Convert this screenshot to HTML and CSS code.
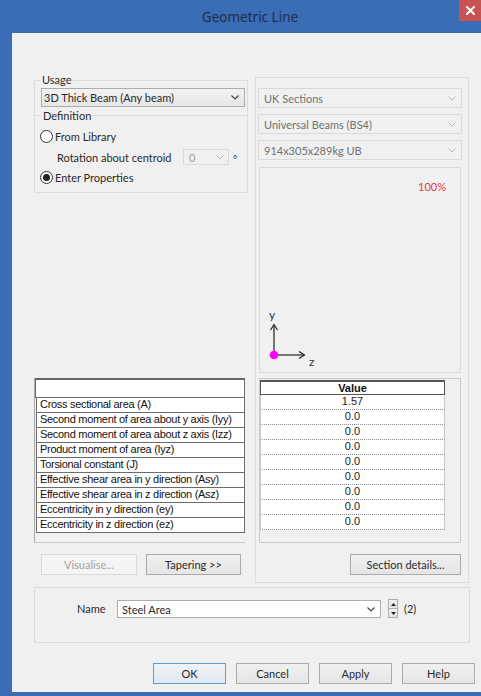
FILE: index.html
```html
<!DOCTYPE html>
<html lang="en">
<head>
<meta charset="utf-8">
<title>Geometric Line</title>
<link rel="stylesheet" href="styles.css">
</head>
<body>
<div class="window">
  <div class="titlebar">
    <span class="title">Geometric Line</span>
    <span class="close">
      <svg width="9" height="9" viewBox="0 0 9 9"><path d="M1 1L8 8M8 1L1 8" stroke="#fff" stroke-width="2" stroke-linecap="square"/></svg>
    </span>
  </div>

  <div class="client">
    <div class="main">
      <!-- left column: usage / definition, property names, actions -->
      <div class="left-col">
        <div class="group usage">
          <span class="legend">Usage</span>
          <div class="combo enabled">
            <span>3D Thick Beam (Any beam)</span>
            <svg class="chev" width="8" height="5" viewBox="0 0 8 5"><path d="M0.5 0.5L4 4L7.5 0.5" fill="none" stroke="#444" stroke-width="1.2"/></svg>
          </div>
          <div class="subhead"><span>Definition</span></div>
          <div class="radio-row"><span class="radio"></span>From Library</div>
          <div class="rotation-row">
            <span class="rot-label">Rotation about centroid</span>
            <div class="combo small">
              <span>0</span>
              <svg class="chev" width="8" height="5" viewBox="0 0 8 5"><path d="M0.5 0.5L4 4L7.5 0.5" fill="none" stroke="#b9b9b9" stroke-width="1"/></svg>
            </div>
            <span class="deg">°</span>
          </div>
          <div class="radio-row"><span class="radio checked"></span>Enter Properties</div>
        </div>

        <div class="ptable">
          <div class="prow head"></div>
          <div class="prow">Cross sectional area (A)</div>
          <div class="prow">Second moment of area about y axis (Iyy)</div>
          <div class="prow">Second moment of area about z axis (Izz)</div>
          <div class="prow">Product moment of area (Iyz)</div>
          <div class="prow">Torsional constant (J)</div>
          <div class="prow">Effective shear area in y direction (Asy)</div>
          <div class="prow">Effective shear area in z direction (Asz)</div>
          <div class="prow">Eccentricity in y direction (ey)</div>
          <div class="prow">Eccentricity in z direction (ez)</div>
        </div>

        <div class="btn-row left">
          <button class="btn disabled visualise">Visualise...</button>
          <button class="btn tapering">Tapering &gt;&gt;</button>
        </div>
      </div>

      <!-- right column: section library, preview, values -->
      <div class="group section">
        <div class="combo">
          <span>UK Sections</span>
          <svg class="chev" width="8" height="5" viewBox="0 0 8 5"><path d="M0.5 0.5L4 4L7.5 0.5" fill="none" stroke="#b9b9b9" stroke-width="1"/></svg>
        </div>
        <div class="combo">
          <span>Universal Beams (BS4)</span>
          <svg class="chev" width="8" height="5" viewBox="0 0 8 5"><path d="M0.5 0.5L4 4L7.5 0.5" fill="none" stroke="#b9b9b9" stroke-width="1"/></svg>
        </div>
        <div class="combo">
          <span>914x305x289kg UB</span>
          <svg class="chev" width="8" height="5" viewBox="0 0 8 5"><path d="M0.5 0.5L4 4L7.5 0.5" fill="none" stroke="#b9b9b9" stroke-width="1"/></svg>
        </div>

        <div class="preview">
          <span class="scale">100%</span>
          <svg class="axes" width="52" height="68" viewBox="0 0 52 68">
            <text x="6" y="16" class="axis-label">y</text>
            <path d="M11 52V22" stroke="#222" stroke-width="1.2"/>
            <path d="M7.5 27L11 21.5L14.5 27" fill="none" stroke="#222" stroke-width="1.2"/>
            <path d="M11 52H41" stroke="#222" stroke-width="1.2"/>
            <path d="M36 48.5L41.5 52L36 55.5" fill="none" stroke="#222" stroke-width="1.2"/>
            <text x="46" y="63" class="axis-label">z</text>
            <circle cx="11" cy="52" r="4.3" fill="#ff00ff"/>
          </svg>
        </div>

        <div class="vtable">
          <div class="vcol">
            <div class="vhead">Value</div>
            <div class="vrow">1.57</div>
            <div class="vrow">0.0</div>
            <div class="vrow">0.0</div>
            <div class="vrow">0.0</div>
            <div class="vrow">0.0</div>
            <div class="vrow">0.0</div>
            <div class="vrow">0.0</div>
            <div class="vrow">0.0</div>
            <div class="vrow">0.0</div>
          </div>
        </div>

        <div class="btn-row right">
          <button class="btn details">Section details...</button>
        </div>
      </div>
    </div>

    <div class="group name-box">
      <span class="name-label">Name</span>
      <div class="name-input">
        <span>Steel Area</span>
        <svg class="chev" width="8" height="5" viewBox="0 0 8 5"><path d="M0.5 0.5L4 4L7.5 0.5" fill="none" stroke="#444" stroke-width="1.2"/></svg>
      </div>
      <div class="spinner">
        <span class="spin up"><svg width="5" height="3" viewBox="0 0 5 3"><path d="M0 3L2.5 0L5 3Z" fill="#222"/></svg></span>
        <span class="spin down"><svg width="5" height="3" viewBox="0 0 5 3"><path d="M0 0L2.5 3L5 0Z" fill="#222"/></svg></span>
      </div>
      <span class="count">(2)</span>
    </div>

    <div class="dialog-buttons">
      <button class="btn default">OK</button>
      <button class="btn">Cancel</button>
      <button class="btn">Apply</button>
      <button class="btn">Help</button>
    </div>
  </div>
</div>
</body>
</html>
```

FILE: styles.css
```css
* {
  box-sizing: border-box;
}

html,
body {
  margin: 0;
  padding: 0;
}

body {
  width: 481px;
  height: 696px;
  overflow: hidden;
  background: #3b6cb6;
  font-family: Lato, "Noto Sans", sans-serif;
  font-size: 11px;
  color: #2a2a2a;
}

.window {
  display: flex;
  flex-direction: column;
  height: 696px;
}

/* title bar */
.titlebar {
  position: relative;
  flex: none;
  height: 33px;
  padding-left: 19px;
  display: flex;
  align-items: center;
  justify-content: center;
  background: #3b6cb6;
}

.title {
  font-family: "Noto Sans", "Open Sans", sans-serif;
  font-size: 13.5px;
  color: #1f2e4b;
}

.close {
  position: absolute;
  top: 0;
  right: 0;
  width: 22px;
  height: 21px;
  display: flex;
  align-items: center;
  justify-content: center;
  background: #c75450;
}

/* dialog client area */
.client {
  flex: 1;
  margin: 0 0 4px 12px;
  padding: 44px 6px 0 22px;
  background: #f0f0f0;
  display: flex;
  flex-direction: column;
}

.main {
  display: grid;
  grid-template-columns: 214px 214px;
  column-gap: 7px;
  height: 506px;
}

.group {
  border: 1px solid #dcdcdc;
}

.legend {
  display: inline-block;
  margin: -9px 0 0 0;
  padding: 0 1px;
  line-height: 15px;
  background: #f0f0f0;
}

/* left column */
.left-col {
  display: flex;
  flex-direction: column;
  padding-bottom: 8px;
}

.usage {
  margin-top: 3px;
  padding: 0 2px 7px 6px;
  display: flex;
  flex-direction: column;
  align-items: flex-start;
}

.combo {
  display: flex;
  align-items: center;
  justify-content: space-between;
  align-self: stretch;
  height: 20px;
  padding: 0 5px 0 5px;
  border: 1px solid #d9d9d9;
  color: #707070;
  white-space: nowrap;
}

.combo.enabled {
  height: 19px;
  margin-top: 1px;
  padding-left: 2px;
  border-color: #acacac;
  background: linear-gradient(#f2f2f2, #e6e6e6);
  color: #2a2a2a;
}

.subhead {
  align-self: stretch;
  display: flex;
  align-items: center;
  height: 14px;
  margin: 1px -2px 0 -6px;
}

.subhead::before,
.subhead::after {
  content: "";
  height: 1px;
  background: #dcdcdc;
}

.subhead::before {
  width: 7px;
}

.subhead::after {
  flex: 1;
}

.subhead span {
  padding: 0 1px;
}

.radio-row {
  display: flex;
  align-items: center;
  height: 16px;
  margin-top: 6px;
  margin-left: -1px;
}

.radio-row:last-child {
  margin-top: 3px;
}

.radio {
  width: 13px;
  height: 13px;
  margin-right: 2px;
  border: 1px solid #333;
  border-radius: 50%;
  background: #fff;
  display: flex;
  align-items: center;
  justify-content: center;
}

.radio.checked::after {
  content: "";
  width: 7px;
  height: 7px;
  border-radius: 50%;
  background: #222;
}

.rotation-row {
  display: flex;
  align-items: center;
  height: 18px;
  margin-top: 4px;
  padding-left: 16px;
}

.rot-label {
  width: 126px;
}

.combo.small {
  align-self: auto;
  width: 46px;
  height: 16px;
  padding: 0 4px 0 5px;
  color: #9a9a9a;
}

.deg {
  margin-left: 4px;
  font-size: 10px;
  line-height: 10px;
  padding-top: 4px;
}

/* property name table */
.ptable {
  margin-top: auto;
  width: 211px;
  height: 165px;
  padding-left: 1px;
  border-left: 1px solid #a9a9a9;
  border-bottom: 1px solid #c9c9c9;
  font-family: "Liberation Sans", Arial, sans-serif;
  font-size: 11px;
  letter-spacing: -0.3px;
  color: #111;
}

.prow {
  height: 15px;
  line-height: 12px;
  padding-left: 3px;
  border: 1px solid #6c6c6c;
  border-top: none;
  background: #fff;
  white-space: nowrap;
  overflow: hidden;
}

.prow.head {
  height: 20px;
  border-top: 2px solid #666;
  margin-left: -1px;
}

/* action buttons */
.btn-row {
  display: flex;
  margin-top: 11px;
}

.btn-row.left {
  padding-left: 7px;
  gap: 9px;
}

.btn-row.right {
  justify-content: flex-end;
  margin-right: 1px;
}

.btn {
  height: 21px;
  padding: 0;
  border: 1px solid #acacac;
  background: linear-gradient(#f0f0f0, #e5e5e5);
  font-family: Lato, "Noto Sans", sans-serif;
  font-size: 11px;
  color: #2a2a2a;
}

.btn.disabled {
  border-color: #d9d9d9;
  background: #f4f4f4;
  color: #a3a3a3;
}

.visualise {
  width: 96px;
}

.tapering {
  width: 95px;
}

.details {
  width: 111px;
}

/* section column */
.section {
  padding: 10px 6px 7px 2px;
  display: flex;
  flex-direction: column;
  gap: 6px;
}

.preview {
  height: 206px;
  margin: 1px 1px 0 1px;
  padding: 12px 14px 1px 3px;
  border: 1px solid #dadada;
  display: flex;
  flex-direction: column;
  justify-content: space-between;
}

.scale {
  align-self: flex-end;
  color: #e0383f;
}

.axis-label {
  font-family: Lato, "Noto Sans", sans-serif;
  font-size: 12px;
  fill: #333;
}

.vtable {
  height: 165px;
  margin: -1px 1px 0 1px;
  padding-top: 1px;
  border: 1px solid #c9c9c9;
  font-family: "Liberation Sans", Arial, sans-serif;
  font-size: 11px;
  color: #222;
}

.vcol {
  width: 185px;
}

.vhead {
  height: 15px;
  line-height: 12px;
  border: 1px solid #555;
  border-top-width: 2px;
  background: #fff;
  text-align: center;
  font-weight: bold;
  color: #111;
}

.vrow {
  height: 15px;
  line-height: 13px;
  border-left: 1px solid #c8c8c8;
  border-right: 1px solid #c8c8c8;
  border-bottom: 1px dotted #8c8c8c;
  background: #fff;
  text-align: center;
}

.section .btn-row {
  margin-top: 5px;
}

/* name row */
.name-box {
  margin-top: 4px;
  width: 436px;
  height: 56px;
  padding: 12px 0 0 42px;
  display: flex;
  align-items: flex-start;
}

.name-label {
  width: 40px;
  line-height: 18px;
}

.name-input {
  width: 264px;
  height: 18px;
  padding: 0 5px 0 4px;
  border: 1px solid #abadb3;
  background: #fff;
  display: flex;
  align-items: center;
  justify-content: space-between;
}

.spinner {
  margin: -1px 0 0 7px;
  width: 10px;
  display: flex;
  flex-direction: column;
}

.spin {
  height: 10px;
  border: 1px solid #acacac;
  background: linear-gradient(#f2f2f2, #e4e4e4);
  display: flex;
  align-items: center;
  justify-content: center;
}

.spin.down {
  margin-top: -1px;
}

.count {
  margin-left: 6px;
  line-height: 18px;
}

/* dialog buttons */
.dialog-buttons {
  display: flex;
  justify-content: flex-end;
  gap: 10px;
  margin-top: 20px;
}

.dialog-buttons .btn {
  width: 73px;
  height: 21px;
}

.btn.default {
  border-color: #5c9ddb;
  background: linear-gradient(#eef3f8, #e2e8ef);
}
```
